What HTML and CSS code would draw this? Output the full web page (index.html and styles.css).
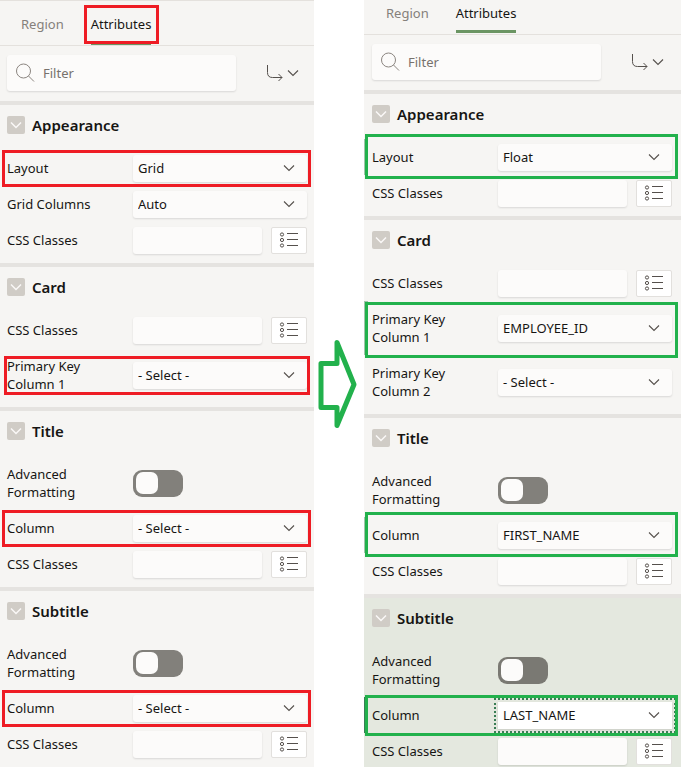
FILE: index.html
```
<!DOCTYPE html>
<html lang="en">
<head>
<meta charset="utf-8">
<title>Property Editor</title>
<link rel="stylesheet" href="styles.css">
</head>
<body>
<svg class="defs" aria-hidden="true">
  <symbol id="chevron" viewBox="0 0 12 8"><path d="M1 1.5 6 6.5 11 1.5"/></symbol>
  <symbol id="list" viewBox="0 0 20 16"><g><circle cx="3" cy="2.500" r="1.600"/><circle cx="3" cy="8" r="1.600"/><circle cx="3" cy="13.500" r="1.600"/><path d="M8 1.500h11M8 7.500h11M8 13.500h11"/></g></symbol>
  <symbol id="search" viewBox="0 0 20 20"><circle cx="8.5" cy="8" r="7"/><path d="M13.5 13 19 18.5"/></symbol>
  <symbol id="goto" viewBox="0 0 18 18"><path d="M1.5 1v7.500q0 5 5 5H16M12.500 10 16 13.500 12.500 17"/></symbol>
</svg>
<main class="compare">
  <section class="panel before" aria-label="Before">
    <nav class="tabs">
      <button class="tab">Region</button>
      <button class="tab active marked">Attributes</button>
    </nav>
    <div class="toolbar">
      <label class="filter"><svg><use href="#search"/></svg><input type="text" placeholder="Filter" aria-label="Filter"></label>
      <button class="goto" aria-label="Go to group"><svg class="goto-icon"><use href="#goto"/></svg><svg class="chev"><use href="#chevron"/></svg></button>
    </div>

    <section class="group">
      <h2><button class="fold" aria-label="Collapse Appearance"><svg class="chev"><use href="#chevron"/></svg></button>Appearance</h2>
      <div class="row marked"><label for="a1">Layout</label><div class="select"><select id="a1"><option>Grid</option></select><svg class="chev"><use href="#chevron"/></svg></div></div>
      <div class="row"><label for="a2">Grid Columns</label><div class="select"><select id="a2"><option>Auto</option></select><svg class="chev"><use href="#chevron"/></svg></div></div>
      <div class="row"><label for="a3">CSS Classes</label><div class="picker"><input id="a3" type="text"><button aria-label="Pick classes"><svg><use href="#list"/></svg></button></div></div>
    </section>

    <section class="group">
      <h2><button class="fold" aria-label="Collapse Card"><svg class="chev"><use href="#chevron"/></svg></button>Card</h2>
      <div class="row"><label for="a4">CSS Classes</label><div class="picker"><input id="a4" type="text"><button aria-label="Pick classes"><svg><use href="#list"/></svg></button></div></div>
      <div class="row tall marked"><label for="a5">Primary Key Column 1</label><div class="select"><select id="a5"><option>- Select -</option></select><svg class="chev"><use href="#chevron"/></svg></div></div>
    </section>

    <section class="group">
      <h2><button class="fold" aria-label="Collapse Title"><svg class="chev"><use href="#chevron"/></svg></button>Title</h2>
      <div class="row tall"><label for="a6">Advanced Formatting</label><input class="switch" id="a6" type="checkbox" role="switch"></div>
      <div class="row marked"><label for="a7">Column</label><div class="select"><select id="a7"><option>- Select -</option></select><svg class="chev"><use href="#chevron"/></svg></div></div>
      <div class="row"><label for="a8">CSS Classes</label><div class="picker"><input id="a8" type="text"><button aria-label="Pick classes"><svg><use href="#list"/></svg></button></div></div>
    </section>

    <section class="group">
      <h2><button class="fold" aria-label="Collapse Subtitle"><svg class="chev"><use href="#chevron"/></svg></button>Subtitle</h2>
      <div class="row tall"><label for="a9">Advanced Formatting</label><input class="switch" id="a9" type="checkbox" role="switch"></div>
      <div class="row marked"><label for="a10">Column</label><div class="select"><select id="a10"><option>- Select -</option></select><svg class="chev"><use href="#chevron"/></svg></div></div>
      <div class="row"><label for="a11">CSS Classes</label><div class="picker"><input id="a11" type="text"><button aria-label="Pick classes"><svg><use href="#list"/></svg></button></div></div>
    </section>
  </section>

  <div class="arrow"><svg viewBox="0 0 42 92" aria-hidden="true"><path d="M3 25.500H19V4.500L36 46.500 19 87.500V69.500H3Z"/></svg></div>

  <section class="panel after" aria-label="After">
    <nav class="tabs">
      <button class="tab">Region</button>
      <button class="tab active">Attributes</button>
    </nav>
    <div class="toolbar">
      <label class="filter"><svg><use href="#search"/></svg><input type="text" placeholder="Filter" aria-label="Filter"></label>
      <button class="goto" aria-label="Go to group"><svg class="goto-icon"><use href="#goto"/></svg><svg class="chev"><use href="#chevron"/></svg></button>
    </div>

    <section class="group">
      <h2><button class="fold" aria-label="Collapse Appearance"><svg class="chev"><use href="#chevron"/></svg></button>Appearance</h2>
      <div class="row marked"><label for="b1">Layout</label><div class="select"><select id="b1"><option>Float</option></select><svg class="chev"><use href="#chevron"/></svg></div></div>
      <div class="row"><label for="b2">CSS Classes</label><div class="picker"><input id="b2" type="text"><button aria-label="Pick classes"><svg><use href="#list"/></svg></button></div></div>
    </section>

    <section class="group">
      <h2><button class="fold" aria-label="Collapse Card"><svg class="chev"><use href="#chevron"/></svg></button>Card</h2>
      <div class="row"><label for="b3">CSS Classes</label><div class="picker"><input id="b3" type="text"><button aria-label="Pick classes"><svg><use href="#list"/></svg></button></div></div>
      <div class="row tall marked"><label for="b4">Primary Key Column 1</label><div class="select"><select id="b4"><option>EMPLOYEE_ID</option></select><svg class="chev"><use href="#chevron"/></svg></div></div>
      <div class="row tall"><label for="b5">Primary Key Column 2</label><div class="select"><select id="b5"><option>- Select -</option></select><svg class="chev"><use href="#chevron"/></svg></div></div>
    </section>

    <section class="group">
      <h2><button class="fold" aria-label="Collapse Title"><svg class="chev"><use href="#chevron"/></svg></button>Title</h2>
      <div class="row tall"><label for="b6">Advanced Formatting</label><input class="switch" id="b6" type="checkbox" role="switch"></div>
      <div class="row marked"><label for="b7">Column</label><div class="select"><select id="b7"><option>FIRST_NAME</option></select><svg class="chev"><use href="#chevron"/></svg></div></div>
      <div class="row"><label for="b8">CSS Classes</label><div class="picker"><input id="b8" type="text"><button aria-label="Pick classes"><svg><use href="#list"/></svg></button></div></div>
    </section>

    <section class="group current">
      <h2><button class="fold" aria-label="Collapse Subtitle"><svg class="chev"><use href="#chevron"/></svg></button>Subtitle</h2>
      <div class="row tall"><label for="b9">Advanced Formatting</label><input class="switch" id="b9" type="checkbox" role="switch"></div>
      <div class="row marked focused"><label for="b10">Column</label><div class="select"><select id="b10"><option>LAST_NAME</option></select><svg class="chev"><use href="#chevron"/></svg></div></div>
      <div class="row"><label for="b11">CSS Classes</label><div class="picker"><input id="b11" type="text"><button aria-label="Pick classes"><svg><use href="#list"/></svg></button></div></div>
    </section>
  </section>
</main>
</body>
</html>
```
FILE: styles.css
```
* { box-sizing: border-box; }
body {
  margin: 0;
  background: #fff;
  color: #161513;
  font: 13px/18px "Noto Sans", "Open Sans", sans-serif;
}
button, input, select { margin: 0; padding: 0; border: 0; font: inherit; color: inherit; background: none; }
svg { display: block; flex: none; fill: none; stroke: #55504c; }
.defs { position: absolute; width: 0; height: 0; }

.compare {
  display: grid;
  grid-template-columns: 314fr 50px 317fr;
  height: 100vh;
  overflow: hidden;
}
.panel { --mark: #ee1c24; --left: 7px; --right: 7px; background: #f6f5f3; overflow: hidden; }
.after { --mark: #22b14c; --left: 8px; --right: 9px; }

/* Tabs */
.tabs {
  display: flex;
  gap: 27px;
  height: 46px;
  padding: 0 14px;
  padding-left: calc(var(--left) + 14px);
  border-top: 1px solid #e4e1dd;
  border-bottom: 1px solid #e4e1dd;
}
.after .tabs { height: 35px; border-top: 0; align-items: flex-end; }
.tab { position: relative; color: #85807b; height: 44px; padding-top: 4px; border-bottom: 3px solid transparent; }
.after .tab { height: 33px; padding: 0 0 4px; margin-bottom: 1px; }
.tab.active { color: #161513; border-color: #6b9563; }
.tab.marked::after { content: ""; position: absolute; inset: 4px -8px -2px -7px; border: 3px solid var(--mark); }

/* Filter bar */
.toolbar {
  display: flex;
  justify-content: space-between;
  align-items: center;
  padding: 9px 15px 10px var(--left);
}
.after .toolbar { padding-right: 17px; }
.filter {
  display: flex;
  align-items: center;
  gap: 8px;
  flex: 0 0 228px;
  height: 36px;
  padding: 0 8px;
  background: #fcfbfa;
  border-radius: 3px;
  box-shadow: 0 1px 2px rgba(0, 0, 0, .12);
}
.filter svg { width: 20px; height: 20px; stroke: #8b8580; }
.filter input { flex: 1; min-width: 0; outline: 0; }
.filter input::placeholder { color: #77726d; opacity: 1; }
.goto { display: flex; align-items: center; gap: 3px; }
.goto-icon { width: 18px; height: 18px; }
.chev { width: 12px; height: 8px; stroke-width: 1.1; }

/* Groups */
.group { padding-bottom: 5px; border-top: 4px solid #e5e3e0; }
.group.current { background: #e4e8df; }
h2 {
  display: flex;
  align-items: center;
  gap: 7px;
  height: 45px;
  margin: 0;
  padding: 0 0 6px var(--left);
  font-size: 15px;
  line-height: 20px;
  font-weight: 600;
}
.fold {
  display: grid;
  place-items: center;
  width: 18px;
  height: 18px;
  background: #d0ccc6;
  border-radius: 2px;
}
.fold .chev { stroke: #fbf9f8; stroke-width: 1.4; }
.row {
  position: relative;
  display: flex;
  align-items: center;
  height: 36px;
  padding: 0 var(--right) 0 var(--left);
}
.row.tall { height: 54px; }
.row label { flex: 0 0 126px; padding-right: 30px; }
.select { display: grid; flex: 1; align-items: center; }
.select > * { grid-area: 1 / 1; }
.select .chev { justify-self: end; margin-right: 12px; pointer-events: none; }
.select select, .picker input {
  appearance: none;
  width: 100%;
  height: 27px;
  padding: 0 5px;
  background: #fcfbfa;
  border-radius: 3px;
  box-shadow: 0 1px 2px rgba(0, 0, 0, .12);
}
.picker { display: flex; flex: 1; gap: 9px; }
.picker input { flex: 1; min-width: 0; }
.picker button {
  display: grid;
  place-items: center;
  width: 36px;
  height: 27px;
  background: #fff;
  border: 1px solid #e2e0dd;
  border-radius: 2px;
}
.picker svg { width: 20px; height: 16px; }

.switch {
  appearance: none;
  display: flex;
  align-items: center;
  width: 50px;
  height: 27px;
  padding: 0 3px;
  background: #82807b;
  border-radius: 9px;
}
.switch::before { content: ""; width: 22px; height: 22px; background: #fcfbfa; border-radius: 7px; }
.current .switch { background: #7a7973; }

/* Highlight frames drawn over the rows */
.row.marked::after {
  content: "";
  position: absolute;
  inset: 0 3px -1px 2px;
  border: 3px solid var(--mark);
  pointer-events: none;
}
.before .tall.marked::after { inset: 8px 4px 7px 4px; }
.after .marked { box-shadow: inset 4px 0 #a3c3ab; }
.after .marked::after { inset: -5px 3px -4px 1px; }
.after .tall.marked::after { inset: 1px 3px -3px 1px; }
.after .focused { box-shadow: inset 4px 0 #3a7d55; }
.after .focused::after { inset: -2px 3px -3px 1px; }
.focused select { background: #fff; border-radius: 0; outline: 2px dotted #3a7d55; outline-offset: 2px; }

.arrow { display: grid; place-items: center; }
.arrow svg { width: 42px; height: 92px; stroke: #22b14c; stroke-width: 5; stroke-linejoin: round; }
```
